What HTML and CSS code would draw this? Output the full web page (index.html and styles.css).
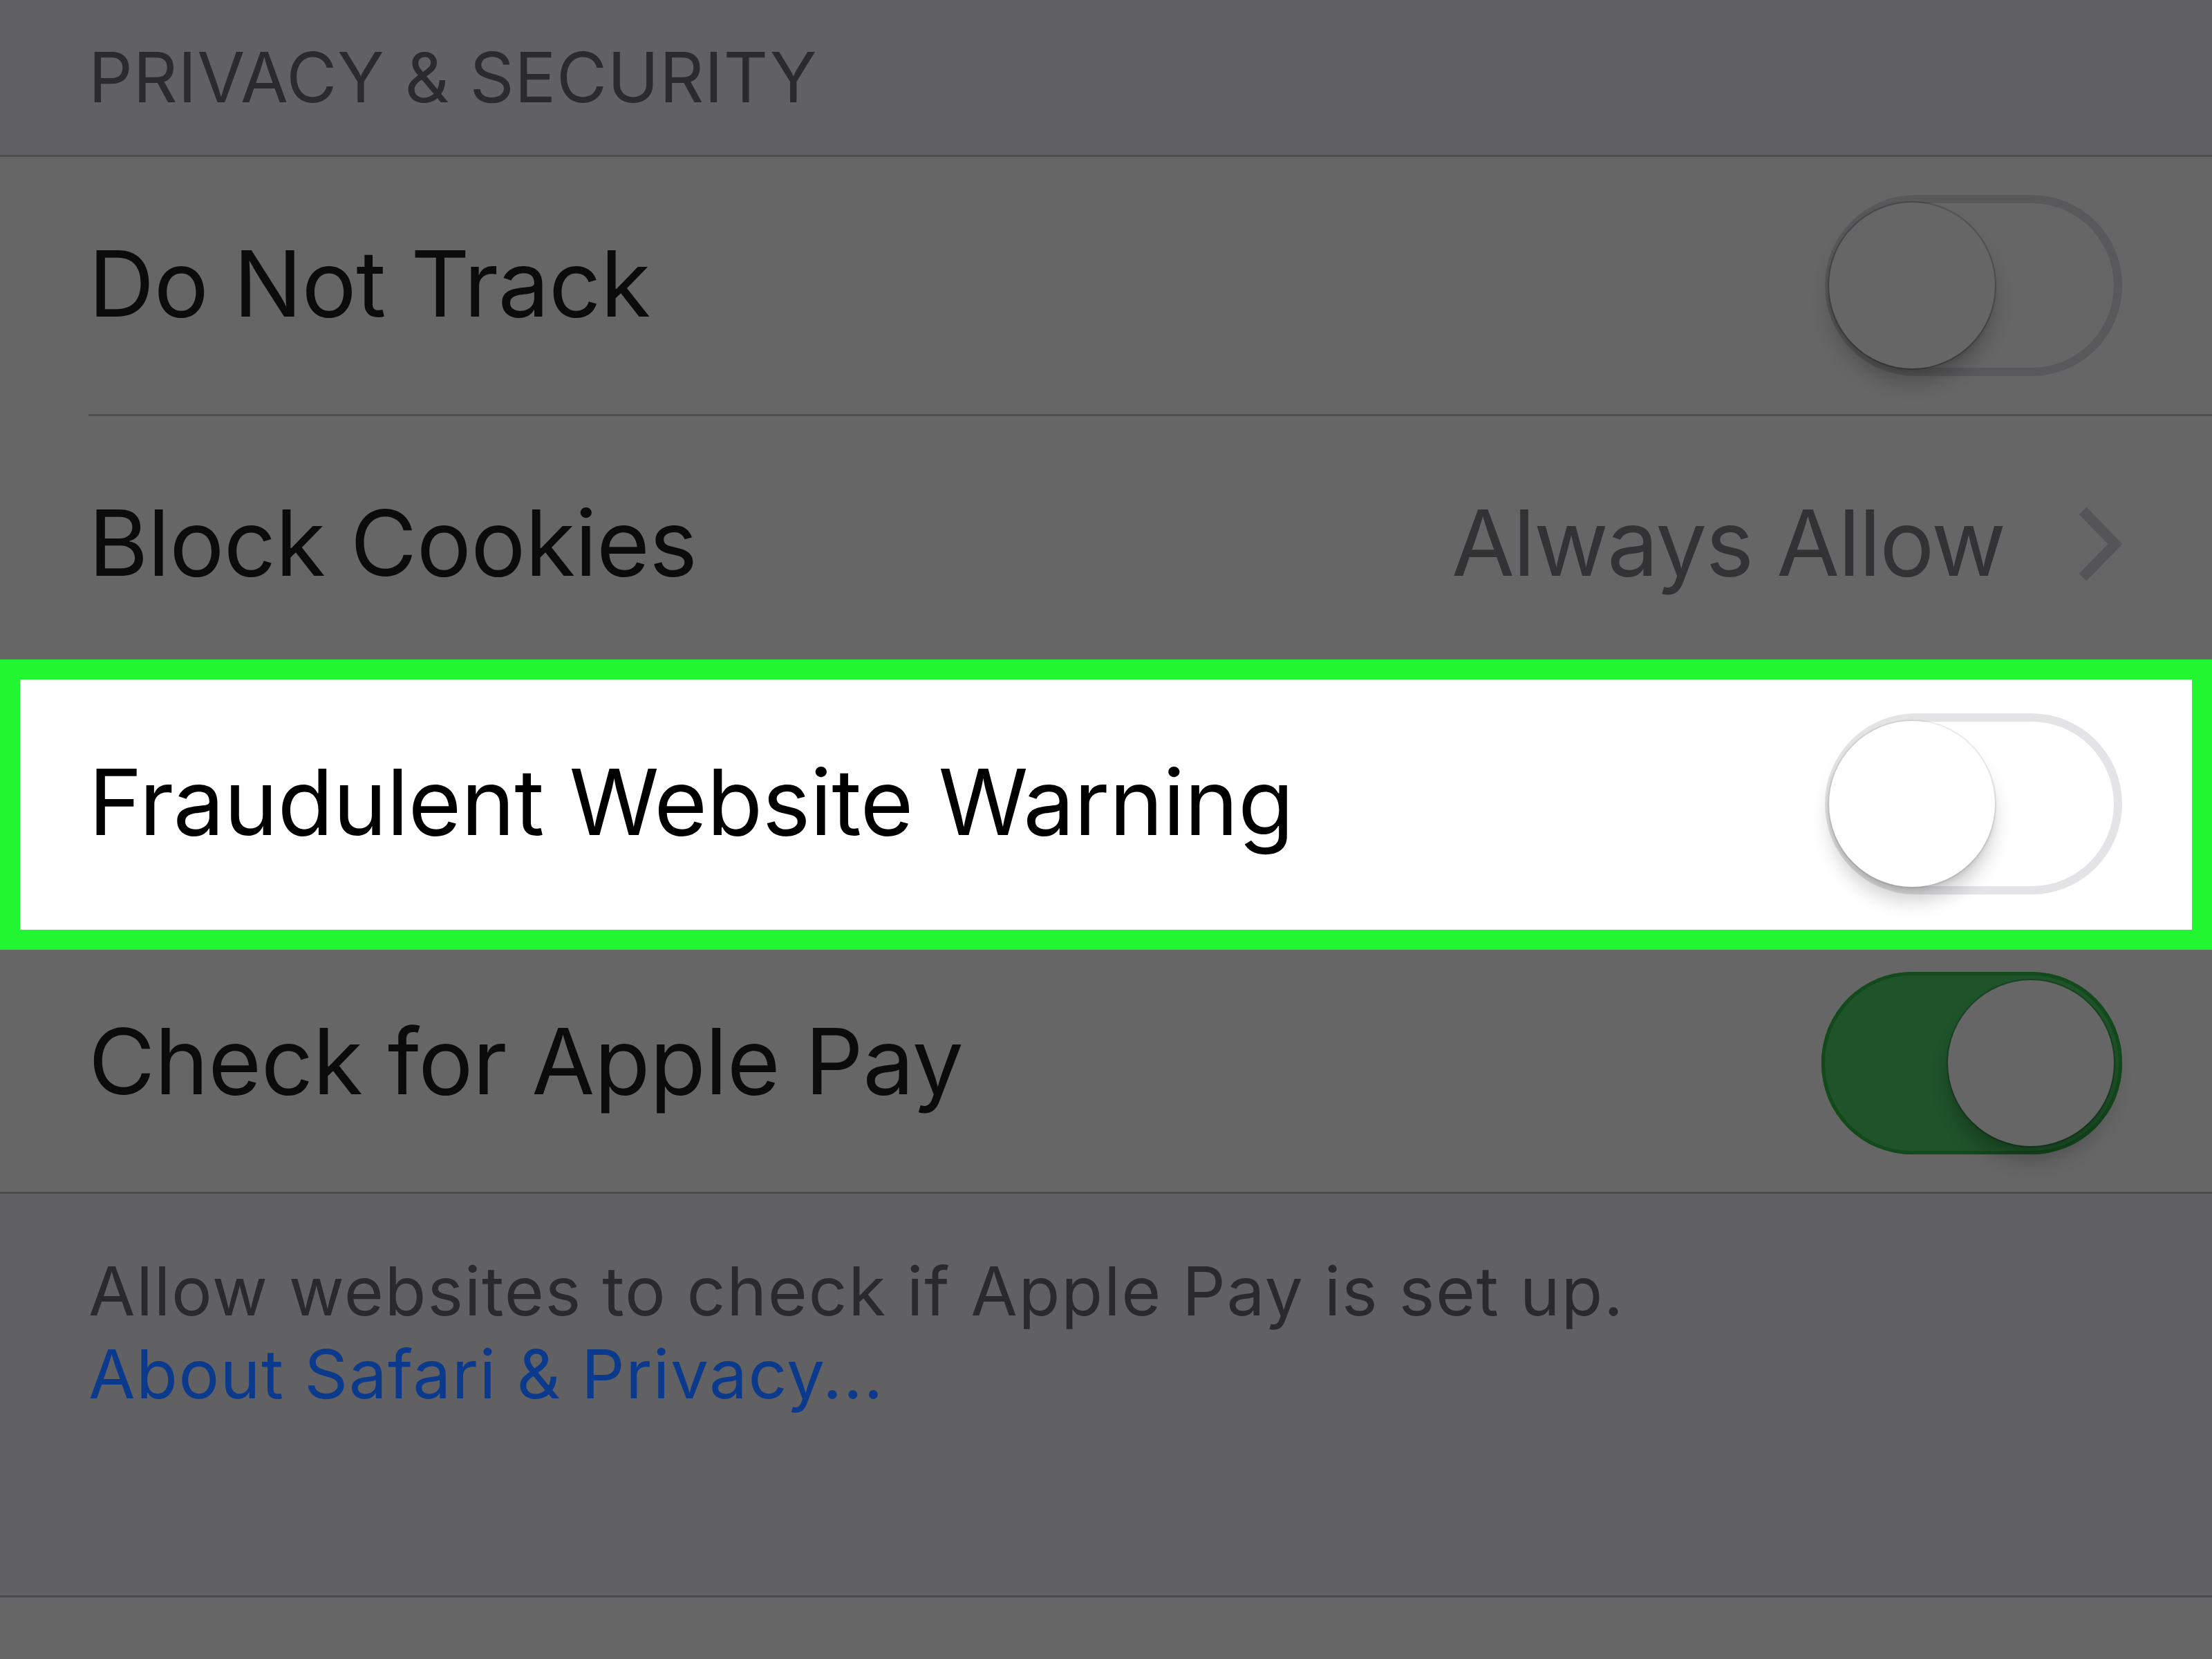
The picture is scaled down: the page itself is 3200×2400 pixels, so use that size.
FILE: index.html
```html
<!DOCTYPE html>
<html lang="en">
<head>
<meta charset="utf-8">
<title>Privacy &amp; Security</title>
<link rel="stylesheet" href="styles.css">
</head>
<body>
<div class="screen">
  <header class="section-header">PRIVACY &amp; SECURITY</header>
  <div class="group">
    <div class="row">
      <div class="row-inner">
        <span class="label">Do Not Track</span>
        <span class="switch"><span class="knob"></span></span>
      </div>
    </div>
    <div class="row">
      <div class="row-inner">
        <span class="label">Block Cookies</span>
        <span class="detail">
          <span class="value">Always Allow</span>
          <svg class="chevron" width="66" height="112" viewBox="0 0 66 112"><polyline points="9,8 56,56 9,104" fill="none" stroke="#555557" stroke-width="15"/></svg>
        </span>
      </div>
    </div>
    <div class="row highlight">
      <div class="row-inner">
        <span class="label">Fraudulent Website Warning</span>
        <span class="switch"><span class="knob"></span></span>
      </div>
      <div class="frame"></div>
    </div>
    <div class="row last">
      <div class="row-inner">
        <span class="label">Check for Apple Pay</span>
        <span class="switch on"><span class="knob"></span></span>
      </div>
    </div>
  </div>
  <footer class="section-footer">
    <p class="footnote">Allow websites to check if Apple Pay is set up.</p>
    <a class="link">About Safari &amp; Privacy...</a>
  </footer>
  <div class="tail"></div>
</div>
</body>
</html>
```

FILE: styles.css
```css
* { box-sizing: border-box; }
html, body {
  margin: 0;
  padding: 0;
  background: #666666;
}
body {
  font-family: Inter, "Noto Sans", "Liberation Sans", sans-serif;
  width: 3200px;
  height: 2400px;
  overflow: hidden;
}
.screen {
  display: flex;
  flex-direction: column;
  width: 3200px;
  height: 2400px;
}
.section-header {
  height: 224px;
  background: #616163;
  color: #2b2b2d;
  font-size: 100px;
  line-height: 100px;
  letter-spacing: 0.7px;
  padding: 62px 0 0 128px;
}
.group {
  background: #666666;
  border-top: 3px solid #4d4d4f;
  border-bottom: 3px solid #4d4d4f;
}
.row {
  padding-left: 128px;
  position: relative;
}
.row-inner {
  height: 375px;
  display: flex;
  align-items: center;
  justify-content: space-between;
  padding-right: 130px;
  padding-bottom: 6px;
  border-bottom: 3px solid #4f4f51;
}
.row.last .row-inner {
  border-bottom: none;
  height: 372px;
}
.label {
  font-size: 132px;
  color: #0b0b0b;
  letter-spacing: -0.6px;
}
.detail {
  display: flex;
  align-items: center;
  gap: 104px;
}
.value {
  font-size: 132px;
  color: #333335;
  letter-spacing: -2px;
}
.chevron { display: block; margin-top: 4px; }

.switch {
  width: 430px;
  height: 262px;
  border-radius: 131px;
  box-shadow: inset 0 0 0 12px #59595b;
  display: flex;
  align-items: center;
  padding-left: 6px;
  margin-top: 6px;
}
.knob {
  width: 240px;
  height: 240px;
  border-radius: 50%;
  background: #666666;
  box-shadow: 0 0 0 2px rgba(0,0,0,0.18), 0 22px 26px rgba(0,0,0,0.2), 0 6px 6px rgba(0,0,0,0.08);
}
.switch.on {
  width: 435px;
  height: 264px;
  background: #1f532a;
  box-shadow: inset 0 0 0 5px #134a1c;
  justify-content: flex-end;
  padding: 0 12px 0 0;
}

.row.highlight { background: #ffffff; }
.row.highlight .label { color: #000000; }
.row.highlight .row-inner { border-bottom-color: #ffffff; }
.row.highlight .switch { box-shadow: inset 0 0 0 12px #e4e4e6; }
.row.highlight .knob {
  background: #ffffff;
  box-shadow: 0 0 0 2px rgba(0,0,0,0.07), 0 22px 26px rgba(0,0,0,0.17), 0 6px 6px rgba(0,0,0,0.08);
}
.frame {
  position: absolute;
  left: 0;
  right: 0;
  top: -23px;
  height: 420px;
  border: 29px solid #21f631;
  pointer-events: none;
}

.section-footer {
  flex: 1;
  background: #616163;
  padding: 81px 0 0 128px;
  border-bottom: 3px solid #4d4d4f;
  font-size: 98px;
  line-height: 120px;
}
.footnote {
  margin: 0;
  color: #2a2a2c;
  letter-spacing: 1.65px;
}
.link {
  color: #0b3a8c;
  text-decoration: none;
  letter-spacing: 1.4px;
}
.tail {
  height: 89px;
  background: #666666;
}
```
